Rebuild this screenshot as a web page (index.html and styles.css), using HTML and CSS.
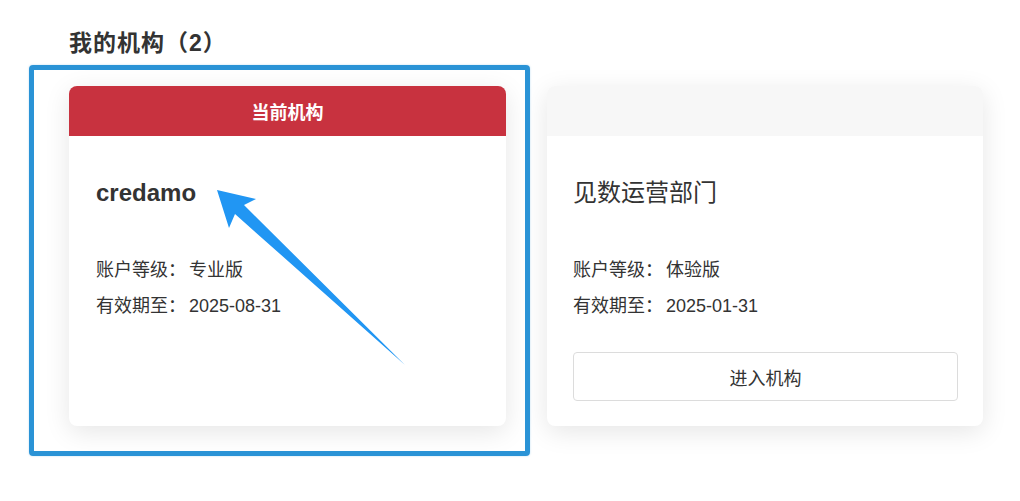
FILE: index.html
```html
<!DOCTYPE html>
<html lang="zh-CN">
<head>
<meta charset="utf-8">
<title>我的机构</title>
<link rel="stylesheet" href="styles.css">
</head>
<body>
<div class="page">
  <h2 class="title">我的机构（2）</h2>
  <div class="cards">
    <div class="card">
      <div class="card-head current">当前机构</div>
      <div class="card-body">
        <div class="name bold">credamo</div>
        <div class="info">
          <div class="line">账户等级<span class="colon">：</span>专业版</div>
          <div class="line">有效期至<span class="colon">：</span>2025-08-31</div>
        </div>
      </div>
    </div>
    <div class="card">
      <div class="card-head plain"></div>
      <div class="card-body">
        <div class="name">见数运营部门</div>
        <div class="info">
          <div class="line">账户等级<span class="colon">：</span>体验版</div>
          <div class="line">有效期至<span class="colon">：</span>2025-01-31</div>
        </div>
        <button class="enter">进入机构</button>
      </div>
    </div>
  </div>
  <div class="frame"></div>
  <svg class="arrow" width="1020" height="501" viewBox="0 0 1020 501">
    <polygon points="217,190 256,199 244,205 405,365 235,214 229,228" fill="#2196f3"/>
  </svg>
</div>
</body>
</html>
```
FILE: styles.css
```css
html, body {
  margin: 0;
  padding: 0;
  background: #ffffff;
}
body {
  font-family: "Liberation Sans", "Noto Sans CJK SC", sans-serif;
  color: #333333;
}
.page {
  position: relative;
  width: 1020px;
  height: 501px;
  padding: 28px 0 0 69px;
  box-sizing: border-box;
}
.title {
  margin: 0 0 28px 0;
  font-size: 23px;
  line-height: 30px;
  font-weight: bold;
  letter-spacing: 1px;
  color: #333333;
}
.cards {
  display: flex;
  gap: 41px;
}
.card {
  width: 437px;
  height: 340px;
  background: #ffffff;
  border-radius: 8px;
  overflow: hidden;
  box-shadow: 0 6px 26px rgba(0, 0, 0, 0.1);
  display: flex;
  flex-direction: column;
}
.card + .card {
  width: 436px;
}
.card-head {
  height: 50px;
  display: flex;
  align-items: center;
  justify-content: center;
  font-size: 18px;
  font-weight: bold;
  color: #ffffff;
}
.card-head.current {
  background: #c8323f;
}
.card-head.plain {
  background: #f7f7f7;
}
.card-body {
  padding: 42px 25px 0 26px;
  display: flex;
  flex-direction: column;
}
.card:first-child .card-body {
  padding-left: 27px;
}
.name {
  font-size: 24px;
  line-height: 30px;
  height: 30px;
  color: #333333;
}
.name.bold {
  font-weight: bold;
}
.info {
  margin-top: 44px;
}
.line {
  font-size: 18px;
  line-height: 36px;
  color: #333333;
}
.colon {
  margin-right: 3px;
}
.enter {
  margin-top: 28px;
  height: 49px;
  width: 100%;
  background: #ffffff;
  border: 1px solid #dcdcdc;
  border-radius: 4px;
  font-family: "Liberation Sans", "Noto Sans CJK SC", sans-serif;
  font-size: 18px;
  color: #333333;
  padding: 0;
}
.frame {
  position: absolute;
  left: 29px;
  top: 65px;
  width: 501px;
  height: 391px;
  box-sizing: border-box;
  border: 5px solid #2a93d6;
  border-radius: 4px;
  box-shadow: 0 0 2px rgba(42, 147, 214, 0.35);
  pointer-events: none;
}
.arrow {
  position: absolute;
  left: 0;
  top: 0;
  pointer-events: none;
}
```
